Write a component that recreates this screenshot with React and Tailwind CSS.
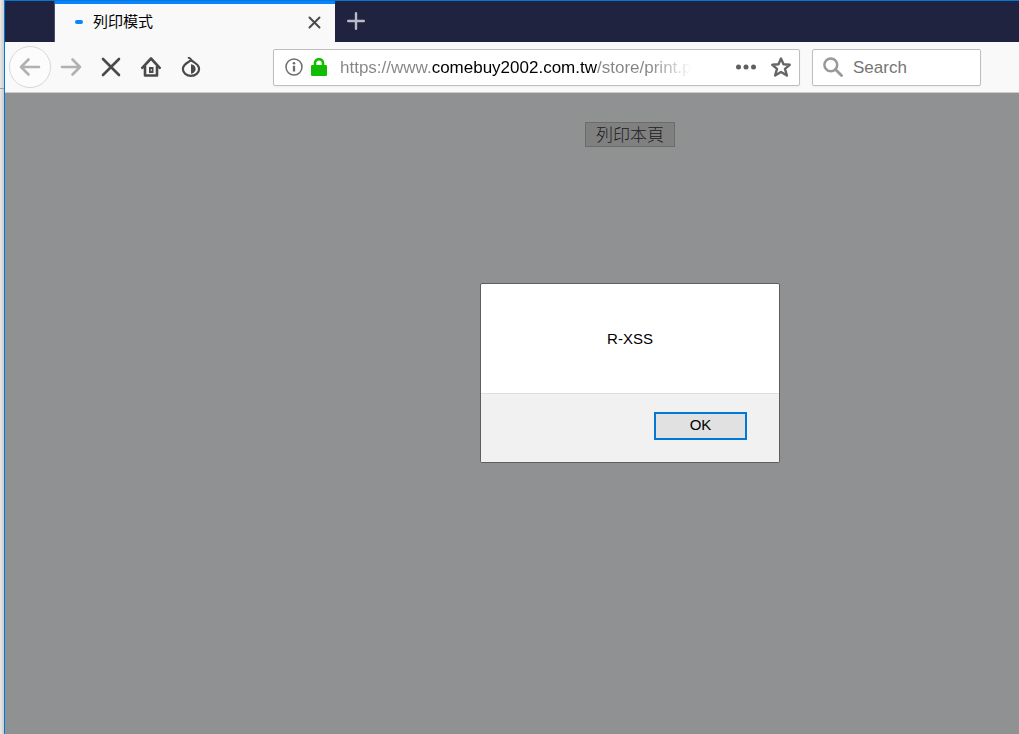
function TabStrip() {
    return (
        <div className="flex h-[42px] bg-[#202340] border-t border-[#0078d7]">
            <div className="w-[50px] shrink-0 border-r border-[#4d4f66]"></div>
            <div className="flex items-center w-70 shrink-0 border-t-3 border-[#0a84ff] bg-[#f9f9fa] pb-[2px]">
                <span className="w-2 h-1 ml-5 rounded-full bg-[#0a84ff]"></span>
                <span className="ml-[10px] text-[15px] leading-5 text-black">列印模式</span>
                <button aria-label="Close tab" className="ml-auto mr-[14px]">
                    <svg width="13" height="13" viewBox="0 0 13 13" fill="none" stroke="#4a4a4c" strokeWidth="2" strokeLinecap="round">
                        <path d="M1.5 1.5l10 10M11.5 1.5l-10 10" />
                    </svg>
                </button>
            </div>
            <button aria-label="New tab" className="ml-3 mb-px">
                <svg width="18" height="18" viewBox="0 0 18 18" fill="none" stroke="#b9bac6" strokeWidth="2.4" strokeLinecap="round">
                    <path d="M9 1.200v15.600M1.200 9h15.600" />
                </svg>
            </button>
        </div>
    );
}

function NavButtons() {
    return (
        <div className="flex items-center">
            <button aria-label="Back" className="flex items-center justify-center w-[42px] h-[42px] ml-1 rounded-full border border-[#d8d8d9] bg-[#fcfcfc]">
                <svg width="22" height="20" viewBox="0 0 22 20" fill="none" stroke="#b1b1b1" strokeWidth="2.6" strokeLinecap="round" strokeLinejoin="round">
                    <path d="M20 10H2M9.500 2.500L2 10l7.500 7.500" />
                </svg>
            </button>
            <button aria-label="Forward" className="flex items-center justify-center w-10 h-10">
                <svg width="22" height="20" viewBox="0 0 22 20" fill="none" stroke="#b1b1b1" strokeWidth="2.6" strokeLinecap="round" strokeLinejoin="round">
                    <path d="M2 10h18M12.500 2.500L20 10l-7.500 7.500" />
                </svg>
            </button>
            <button aria-label="Stop" className="flex items-center justify-center w-10 h-10">
                <svg width="20" height="20" viewBox="0 0 20 20" fill="none" stroke="#4a4a4b" strokeWidth="2.600" strokeLinecap="round">
                    <path d="M2 2l16 16M18 2L2 18" />
                </svg>
            </button>
            <button aria-label="Home" className="flex items-center justify-center w-10 h-10">
                <svg width="20" height="20" viewBox="0 0 20 20" fill="none" stroke="#4a4a4b" strokeWidth="2.6" strokeLinecap="round" strokeLinejoin="round">
                    <path d="M1.300 10.800L10 1.500l8.700 9.300" />
                    <path d="M4 9.500v9h12v-9" />
                    <rect x="8" y="10" width="4.500" height="6" fill="#4a4a4b" stroke="none" />
                    <rect x="9.700" y="12" width="1.200" height="2" fill="#c9c9c9" stroke="none" />
                </svg>
            </button>
            <button aria-label="Tor" className="flex items-center justify-center w-10 h-10">
                <svg width="20" height="20" viewBox="0 0 20 20" fill="none" stroke="#4a4a4b" strokeWidth="2.200" strokeLinecap="round" strokeLinejoin="round">
                    <path d="M10 3C9 5 1.900 6.500 1.900 12c0 4 3.600 6.900 8.100 6.900s8.100-2.900 8.100-6.900c0-5.500-6.600-7-8.100-9z" />
                    <path d="M7.600 .8c1.400.2 2.400.9 2.400 2.200" strokeWidth="1.800" />
                    <path d="M10 7.300c2.900.4 4.600 2.300 4.600 4.700s-1.700 4.300-4.600 4.700z" fill="#4a4a4b" stroke="none" />
                </svg>
            </button>
        </div>
    );
}

function UrlBar() {
    return (
        <div className="flex items-center flex-1 h-[37px] ml-[62px] pl-[11px] pr-2 rounded-xs border border-[#bebebe] bg-white shadow-xs">
            <button aria-label="Site information">
                <svg width="18" height="18" viewBox="0 0 18 18" fill="none" stroke="#6d6d6e">
                    <circle cx="9" cy="9" r="8" strokeWidth="1.500" />
                    <circle cx="9" cy="5.200" r="1.300" fill="#6d6d6e" stroke="none" />
                    <path d="M9 7.800v5.700" strokeWidth="2.300" />
                </svg>
            </button>
            <svg className="ml-2 shrink-0" width="16" height="18" viewBox="0 0 16 18">
                <path d="M4 8V5a4 3.800 0 0 1 8 0v3" fill="none" stroke="#12bc00" strokeWidth="2.600" />
                <rect x="0" y="7" width="16" height="11" rx="1.200" fill="#12bc00" />
            </svg>
            <input
                type="text"
                aria-label="Address"
                defaultValue="https://www.comebuy2002.com.tw/store/print.php"
                className="flex-1 min-w-0 ml-[13px] mr-11 pt-[2px] text-[17px] leading-6 outline-none text-transparent caret-black bg-clip-text bg-[linear-gradient(to_right,#858585_92px,#000_92px,#000_257px,#858585_257px,#858585_310px,transparent_352px)]"
            />
            <button aria-label="Page actions">
                <svg width="20" height="6" viewBox="0 0 20 6" fill="#5f5f60">
                    <circle cx="2.500" cy="3" r="2.500" />
                    <circle cx="10" cy="3" r="2.500" />
                    <circle cx="17.500" cy="3" r="2.500" />
                </svg>
            </button>
            <button aria-label="Bookmark this page" className="ml-[15px]">
                <svg width="20" height="20" viewBox="0 0 20 20" fill="none" stroke="#656566" strokeWidth="2.400" strokeLinejoin="round">
                    <path d="M10 1.500l2.500 5.700 6.200.6-4.700 4.100 1.900 6.600L10 15l-5.900 3.500L6 11.900 1.300 7.800l6.200-.6z" />
                </svg>
            </button>
        </div>
    );
}

function SearchBox() {
    return (
        <label className="flex items-center w-[169px] h-[37px] ml-3 mr-[38px] px-[10px] rounded-xs border border-[#bebebe] bg-white shadow-xs">
            <svg className="shrink-0" width="20" height="20" viewBox="0 0 20 20" fill="none" stroke="#999999" strokeLinecap="round">
                <circle cx="7.800" cy="7.800" r="6.400" strokeWidth="2.500" />
                <path d="M12.500 12.500l6 6" strokeWidth="2.800" />
            </svg>
            <input
                type="text"
                aria-label="Search"
                placeholder="Search"
                className="flex-1 min-w-0 ml-[10px] pt-[2px] text-[17px] leading-6 outline-none placeholder:text-[#757575]"
            />
        </label>
    );
}

function AlertDialog() {
    return (
        <div role="alertdialog" aria-labelledby="alert-text" className="w-75 rounded-xs border border-[#5d5e5f] bg-white overflow-hidden">
            <p id="alert-text" className="h-[109px] pt-[45px] text-center text-[15px] leading-5 text-black">R-XSS</p>
            <div className="flex justify-end px-8 pt-[18px] pb-[22px] border-t border-[#dfdfdf] bg-[#f1f1f1]">
                <button className="w-[93px] h-7 pb-[2px] border-2 border-[#0078d7] bg-[#e1e1e1] text-[15px] leading-5 text-black">OK</button>
            </div>
        </div>
    );
}

export default function App() {
    return (
        <div className="flex min-h-screen bg-[#e4e4e4] font-['Liberation_Sans','Noto_Sans_CJK_TC',sans-serif]">
            {/* edge of the window behind */}
            <div className="w-1 shrink-0 bg-linear-to-r from-[#e9e9e9] to-[#cccccc]">
                <div className="h-[89px] border-b border-[#a0a0a0]"></div>
            </div>
            <div className="flex flex-col flex-1 min-w-0 border-l border-[#0078d7]">
                <TabStrip />
                <div className="flex items-center h-[51px] border-b border-[#cccccc] bg-[#f9f9fa]">
                    <NavButtons />
                    <UrlBar />
                    <SearchBox />
                </div>
                {/* the window runs on past the right edge, so its centre sits right of ours */}
                <main className="flex flex-col items-center flex-1 pl-[236px] pt-[29px] bg-[#909191] bg-[repeating-conic-gradient(#8f9091_0_25%,#919292_0_50%)] bg-size-[4px_4px]">
                    <button className="w-[90px] h-[25px] pt-[2px] mb-34 border border-[#6c6c6d] bg-[#808081] text-[17px] leading-5 font-light text-[#1c1c1c]">列印本頁</button>
                    <AlertDialog />
                </main>
            </div>
        </div>
    );
}
